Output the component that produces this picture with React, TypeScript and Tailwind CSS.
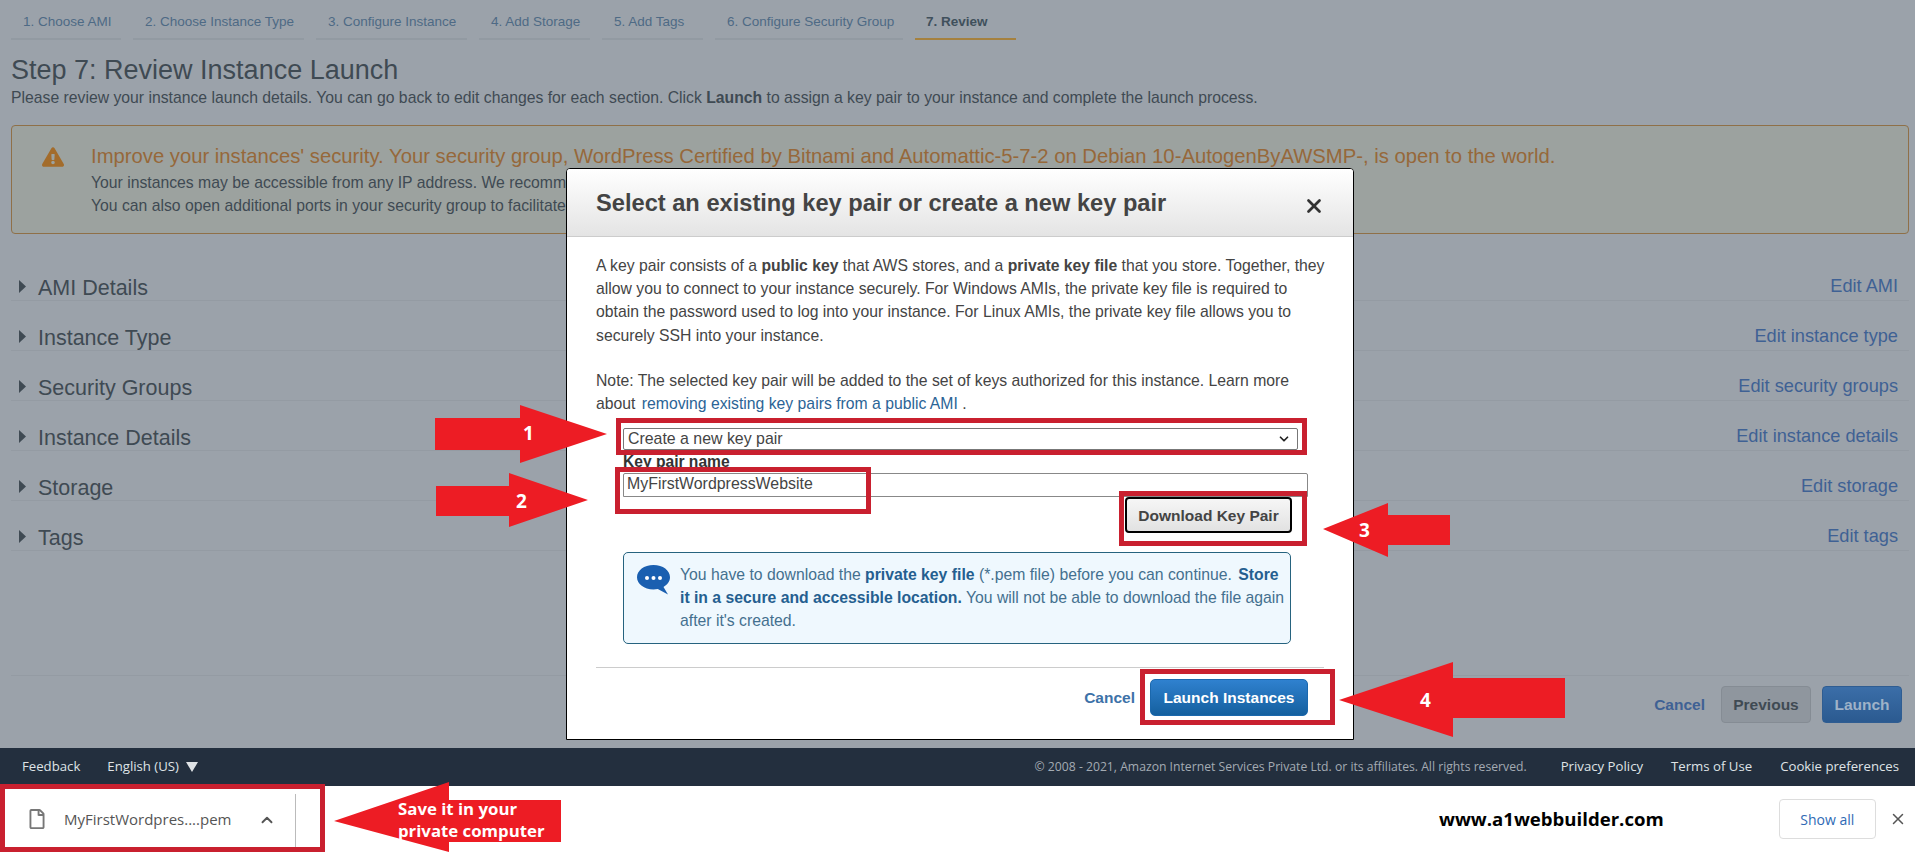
import { FaExclamationTriangle } from 'react-icons/fa';
import { FaRegFile } from 'react-icons/fa';
import { LuChevronUp, LuChevronDown, LuX } from 'react-icons/lu';

const tabs = [
    { label: '1. Choose AMI', width: 'w-[110px]' },
    { label: '2. Choose Instance Type', width: 'w-[171px]' },
    { label: '3. Configure Instance', width: 'w-[151px]' },
    { label: '4. Add Storage', width: 'w-[111px]' },
    { label: '5. Add Tags', width: 'w-[101px]' },
    { label: '6. Configure Security Group', width: 'w-[188px]' },
];

const rows = [
    { title: 'AMI Details', edit: 'Edit AMI' },
    { title: 'Instance Type', edit: 'Edit instance type' },
    { title: 'Security Groups', edit: 'Edit security groups' },
    { title: 'Instance Details', edit: 'Edit instance details' },
    { title: 'Storage', edit: 'Edit storage' },
    { title: 'Tags', edit: 'Edit tags' },
];

function Annotations() {
    return (
        <>
            <div className="absolute left-[616px] top-[418px] w-[691px] h-[37px] border-[5px] border-[#c9202f]" />
            <div className="absolute left-[615px] top-[467px] w-[256px] h-[47px] border-[5px] border-[#c9202f]" />
            <div className="absolute left-[1119px] top-[491px] w-[188px] h-[55px] border-[5px] border-[#c9202f]" />
            <div className="absolute left-[1140px] top-[669px] w-[195px] h-[56px] border-[5px] border-[#c9202f]" />
            <div className="absolute left-0 top-[784px] w-[325px] h-[68px] border-[5px] border-[#c9202f]" />

            <svg className="absolute inset-0" width="1915" height="852" viewBox="0 0 1915 852">
                <g fill="#ed1c24">
                    <polygon points="435,418 520,418 520,405 607,434 520,463 520,450 435,450" />
                    <polygon points="436,486 509,486 509,473 588,500 509,527 509,516 436,516" />
                    <polygon points="1450,515 1388,515 1388,503 1323,529 1388,557 1388,545 1450,545" />
                    <polygon points="1565,678 1453,678 1453,662 1339,700 1453,737 1453,718 1565,718" />
                    <polygon points="561,800 449,800 449,782 334,821 449,852 449,842 561,842" />
                </g>
            </svg>

            <span className="absolute left-[523px] top-[421px] text-[19px] leading-6 font-bold text-white font-['Open_Sans',sans-serif]">1</span>
            <span className="absolute left-[516px] top-[489px] text-[19px] leading-6 font-bold text-white font-['Open_Sans',sans-serif]">2</span>
            <span className="absolute left-[1359px] top-[518px] text-[19px] leading-6 font-bold text-white font-['Open_Sans',sans-serif]">3</span>
            <span className="absolute left-[1420px] top-[688px] text-[19px] leading-6 font-bold text-white font-['Open_Sans',sans-serif]">4</span>
            <div className="absolute left-[398px] top-[798px] text-[16.8px] leading-[22px] font-bold text-white font-['Open_Sans',sans-serif]">
                Save it in your
                <br />
                private computer
            </div>
        </>
    );
}

function KeyPairModal() {
    return (
        <div className="absolute left-[566px] top-[168px] w-[788px] h-[572px] bg-white border border-black rounded-t-[4px] overflow-hidden text-[#444]">
            <div className="h-[68px] px-[29px] flex items-center justify-between bg-gradient-to-b from-white to-[#e4e4e4] border-b border-[#ccc]">
                <h2 className="text-[23.65px] font-bold text-[#444] mt-[3px]">Select an existing key pair or create a new key pair</h2>
                <LuX className="size-[22px] mr-[-1px] mt-[6px] text-[#333]" strokeWidth={3} />
            </div>

            <div className="px-[29px] pt-[17px]">
                <p className="text-[15.75px] leading-[23.2px] whitespace-nowrap">
                    A key pair consists of a <b>public key</b> that AWS stores, and a <b>private key file</b> that you store. Together, they
                    <br />
                    allow you to connect to your instance securely. For Windows AMIs, the private key file is required to
                    <br />
                    obtain the password used to log into your instance. For Linux AMIs, the private key file allows you to
                    <br />
                    securely SSH into your instance.
                </p>
                <p className="mt-[22px] text-[15.75px] leading-[23.2px] whitespace-nowrap">
                    Note: The selected key pair will be added to the set of keys authorized for this instance. Learn more
                    <br />
                    about <span className="text-[#2b6496] ml-[2px]">removing existing key pairs from a public AMI</span> .
                </p>

                <div className="ml-[27px] mt-[13px] w-[675px] h-[22px] pl-[4px] pr-[6px] flex items-center justify-between border border-[#777] rounded-[2px] text-[15.9px]">
                    <span>Create a new key pair</span>
                    <LuChevronDown className="size-[14px] text-[#222]" strokeWidth={3} />
                </div>

                <div className="ml-[27px] mt-[2px] text-[15.6px] leading-[20px] font-bold text-[#333]">Key pair name</div>
                <div className="ml-[27px] mt-[1px] w-[685px] h-[24px] pl-[3px] flex items-center border border-[#888] rounded-t-[2px] text-[15.9px]">
                    <span className="-mt-[2px]">MyFirstWordpressWebsite</span>
                </div>

                <div className="flex justify-end mr-[32px]">
                    <button className="w-[167px] h-[36px] bg-gradient-to-b from-[#f6f6f6] to-[#e2e2e2] border-2 border-black rounded-[4px] text-[15.5px] font-bold text-[#444]">
                        Download Key Pair
                    </button>
                </div>

                <div className="ml-[27px] mt-[19px] w-[668px] h-[92px] flex bg-[#eff8fe] border border-[#26637f] rounded-[5px] pl-[12px] pt-[10px]">
                    <svg className="shrink-0 mt-[1px]" width="35" height="31" viewBox="0 0 35 31">
                        <path d="M17.5 1C27 1 34 6.5 34 13.2c0 4-2.600 7.500-6.500 9.700L32 30.500 21.800 25c-1.400.3-2.800.4-4.300.4C8 25.400 1 19.900 1 13.200S8 1 17.500 1z" fill="#1a5fb0" />
                        <circle cx="11" cy="14" r="2" fill="#fff" />
                        <circle cx="17.500" cy="14" r="2" fill="#fff" />
                        <circle cx="24" cy="14" r="2" fill="#fff" />
                    </svg>
                    <p className="ml-[9px] text-[15.75px] leading-[23px] text-[#44708f] whitespace-nowrap">
                        You have to download the <b className="text-[#255f90]">private key file</b> (*.pem file) before you can continue. <b className="text-[#255f90] ml-[2px]">Store</b>
                        <br />
                        <b className="text-[#255f90]">it in a secure and accessible location.</b> You will not be able to download the file again
                        <br />
                        after it's created.
                    </p>
                </div>

                <div className="mt-[23px] border-t border-[#ccc]" />

                <div className="mt-[11px] flex items-center justify-end mr-[16px] gap-[15px]">
                    <span className="text-[15.5px] font-bold text-[#3d72a8]">Cancel</span>
                    <button className="w-[158px] h-[37px] bg-gradient-to-b from-[#2f81cf] to-[#14609f] border border-[#1b68ad] rounded-[5px] text-[15.5px] font-bold text-white">
                        Launch Instances
                    </button>
                </div>
            </div>
        </div>
    );
}

export default function App() {
    return (
        <div className="relative w-[1915px] h-[852px] overflow-hidden flex flex-col bg-white font-['Liberation_Sans',Arial,sans-serif]">
            <main className="flex-1 bg-[#9ba2aa] text-[#3c4750] flex flex-col pb-[25px]">
                <div className="flex gap-[12px] pl-[11px] h-[40px]">
                    {tabs.map((tab) => (
                        <div key={tab.label} className={`${tab.width} pl-[12px] pt-[14px] text-[13.5px] leading-4 text-[#4e6a85] border-b-2 border-[#929aa2] whitespace-nowrap`}>
                            {tab.label}
                        </div>
                    ))}
                    <div className="w-[101px] pl-[11px] pt-[14px] text-[13.5px] leading-4 font-bold text-[#40505c] border-b-2 border-[#a5813f]">7. Review</div>
                </div>

                <h1 className="mt-[15px] ml-[11px] text-[27px] leading-[30px] text-[#3f4a53]">Step 7: Review Instance Launch</h1>
                <p className="ml-[11px] mt-[3px] text-[15.75px] leading-[20px] text-[#3f4a53]">
                    Please review your instance launch details. You can go back to edit changes for each section. Click <b>Launch</b> to assign a key pair to your instance and complete the launch process.
                </p>

                <div className="mx-[11px] mt-[17px] w-[1898px] h-[109px] flex bg-[#9ca29f] border border-[#8f7048] rounded-[4px] pl-[30px] pt-[19px]">
                    <FaExclamationTriangle className="size-[22px] text-[#a36c2b] mt-[1px]" />
                    <div className="ml-[27px]">
                        <div className="text-[20.25px] leading-[22px] text-[#96683a] whitespace-nowrap">
                            Improve your instances' security. Your security group, WordPress Certified by Bitnami and Automattic-5-7-2 on Debian 10-AutogenByAWSMP-, is open to the world.
                        </div>
                        <div className="mt-[4px] text-[15.75px] leading-[23px] text-[#3f4a53] whitespace-nowrap">
                            Your instances may be accessible from any IP address. We recommend
                            <br />
                            You can also open additional ports in your security group to facilitate
                        </div>
                    </div>
                </div>

                <div className="mt-[17px] mx-[11px] w-[1898px]">
                    {rows.map((row) => (
                        <div key={row.title} className="h-[50px] pt-[24px] flex justify-between border-b border-[#949ba3]">
                            <div className="flex items-start">
                                <svg className="mt-[5px] ml-[8px]" width="7" height="13" viewBox="0 0 7 13">
                                    <polygon points="0,0 7,6.500 0,13" fill="#3f4a53" />
                                </svg>
                                <span className="ml-[12px] mt-[1px] text-[21.5px] leading-6 text-[#3f4a53]">{row.title}</span>
                            </div>
                            <span className="text-[18.2px] leading-5 text-[#3f6194] mr-[11px] mt-[1px]">{row.edit}</span>
                        </div>
                    ))}
                </div>

                <div className="mt-auto mx-[11px] w-[1898px] border-t border-[#949ba3]" />
                <div className="mt-[10px] flex justify-end items-center pr-[13px]">
                    <span className="text-[15.5px] font-bold text-[#3f6194] mr-[16px]">Cancel</span>
                    <button className="w-[90px] h-[37px] bg-[#8f969e] border border-[#858c94] rounded-[4px] text-[15.5px] font-bold text-[#3f4a53] mr-[11px]">Previous</button>
                    <button className="w-[80px] h-[37px] bg-gradient-to-b from-[#3b6ea8] to-[#2b5a90] border border-[#2f5d92] rounded-[4px] text-[15.5px] font-bold text-[#9fb2c8]">Launch</button>
                </div>
            </main>

            <footer className="h-[38px] shrink-0 bg-[#232f3e] flex items-center pl-[22px] pr-[16px] text-[13.2px] text-[#dfe3e6] font-['Open_Sans',sans-serif]">
                <span>Feedback</span>
                <span className="ml-[27px]">English (US)</span>
                <svg className="ml-[7px]" width="12" height="10" viewBox="0 0 12 10">
                    <polygon points="0,0 12,0 6,10" fill="#dfe3e6" />
                </svg>
                <span className="ml-auto text-[12.2px] text-[#a3abb3]">© 2008 - 2021, Amazon Internet Services Private Ltd. or its affiliates. All rights reserved.</span>
                <span className="ml-[34px]">Privacy Policy</span>
                <span className="ml-[28px]">Terms of Use</span>
                <span className="ml-[28px]">Cookie preferences</span>
            </footer>

            <div className="h-[66px] shrink-0 bg-white flex items-center">
                <div className="flex items-center pl-[27px] w-[296px] h-full relative">
                    <FaRegFile className="size-[20px] text-[#777]" />
                    <span className="ml-[17px] text-[15px] text-[#555] font-['Open_Sans',sans-serif]">MyFirstWordpres....pem</span>
                    <LuChevronUp className="absolute left-[258px] top-[25px] size-[18px] text-[#555]" strokeWidth={2.500} />
                    <div className="absolute right-0 top-[8px] bottom-0 w-px bg-[#bbb]" />
                </div>
                <span className="ml-[1143px] text-[18.6px] font-bold text-black font-['Open_Sans',sans-serif]">www.a1webbuilder.com</span>
                <button className="ml-[115px] w-[97px] h-[40px] bg-white border border-[#ddd] rounded-[4px] text-[14px] text-[#2f6ab5] font-['Open_Sans',sans-serif]">Show all</button>
                <LuX className="ml-[13px] size-[18px] text-[#555]" strokeWidth={2} />
            </div>

            <KeyPairModal />
            <Annotations />
        </div>
    );
}
